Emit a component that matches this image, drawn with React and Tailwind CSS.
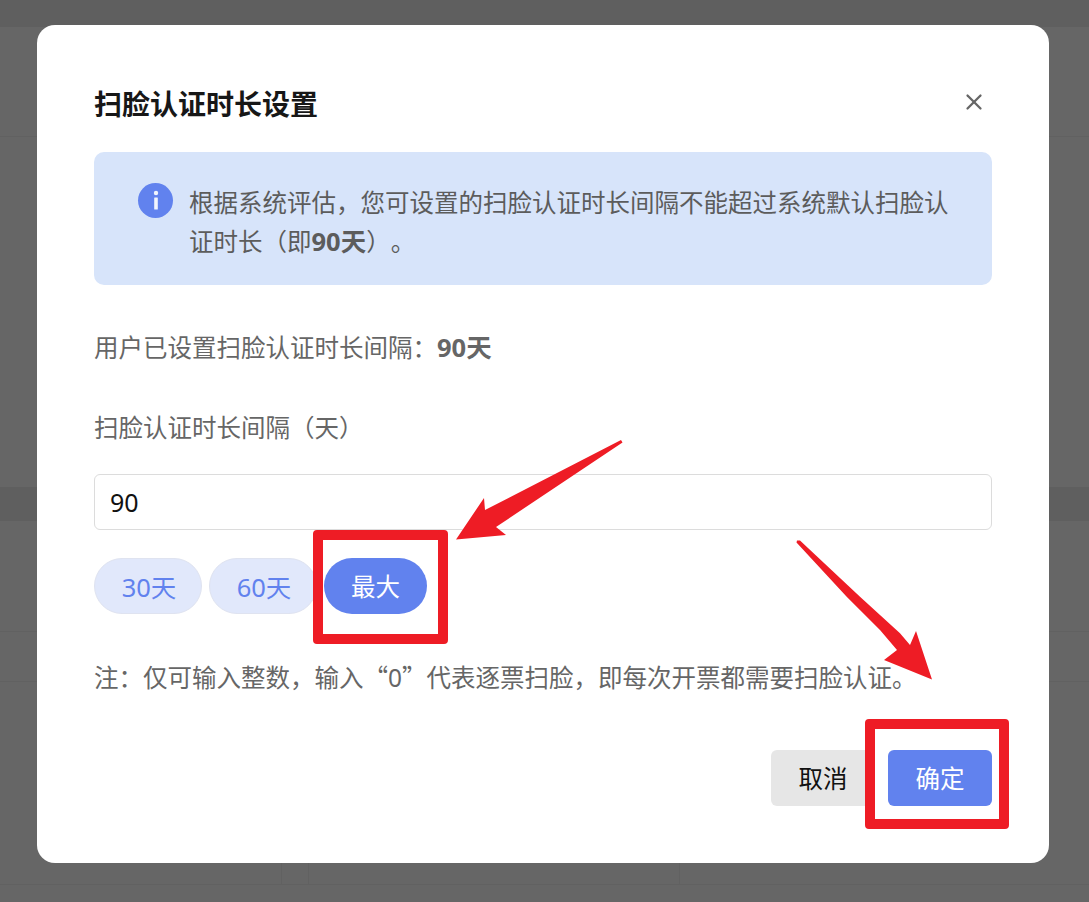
import React from "react";
import { X } from "lucide-react";

const font = { fontFamily: '"Noto Sans", "Noto Sans CJK SC", sans-serif' };
const cjkFont = { fontFamily: '"Noto Sans CJK SC", sans-serif' };

function Backdrop() {
  return (
    <div className="flex h-[902px] flex-col bg-[#666666]">
      <div className="h-[27px] bg-[#5f5f5f]" />
      <div className="h-[110px] border-b border-[#616161]" />
      <div className="h-[350px]" />
      <div className="h-[34px] bg-[#5f5f5f]" />
      <div className="h-[111px] border-b border-[#616161]" />
      <div className="h-[50px] border-b border-[#616161]" />
      <div className="relative h-[203px] border-b border-[#616161]">
        <div className="absolute bottom-0 left-[281px] h-[30px] w-px bg-[#616161]" />
        <div className="absolute bottom-0 left-[308px] h-[30px] w-px bg-[#616161]" />
        <div className="absolute bottom-0 left-[679px] h-[30px] w-px bg-[#616161]" />
      </div>
    </div>
  );
}

function InfoIcon() {
  return (
    <div className="flex h-[35px] w-[35px] shrink-0 items-center justify-center rounded-full bg-[#6182ee]">
      <svg width="8" height="21" viewBox="0 0 8 21" fill="#f2f5fd">
        <circle cx="4" cy="3" r="2.2" />
        <rect x="2.2" y="7.5" width="3.6" height="12" rx="0.5" />
      </svg>
    </div>
  );
}

function Arrows() {
  return (
    <svg
      className="pointer-events-none absolute left-0 top-0"
      width="1089"
      height="902"
      viewBox="0 0 1089 902"
    >
      <polygon
        fill="#ee1c25"
        points="621,440 622.5,442.5 496,527 506,535 456,539.5 484,498 485,510"
      />
      <polygon
        fill="#ee1c25"
        points="797,540.5 800,540.5 860,596.7 900,633.3 910,645 916,631 932,679.5 884,660 897,650 880,630 846.7,596.7 796.5,542.5"
      />
    </svg>
  );
}

export default function App() {
  return (
    <div
      className="relative h-[902px] w-[1089px] overflow-hidden [text-spacing-trim:space-all]"
      style={font}
    >
      <Backdrop />

      <div className="absolute left-[37px] top-[25px] flex h-[838px] w-[1012px] flex-col rounded-[18px] bg-white px-[57px] pt-[60px]">
        <div className="flex h-[39px] items-start justify-between">
          <h2 className="text-[28px] font-bold leading-[39px] text-[#171717]">扫脸认证时长设置</h2>
          <X size={26} strokeWidth={2.1} className="mr-[5px] mt-[4px] text-[#666666]" />
        </div>

        <div className="mt-[28px] flex h-[133px] gap-[16px] rounded-[10px] bg-[#d7e4fa] pl-[44px] pr-[36px] pt-[31px]">
          <InfoIcon />
          <p className="text-[24.5px] leading-[39px] text-[#5c5c5c]">
            根据系统评估，您可设置的扫脸认证时长间隔不能超过系统默认扫脸认证时长（即<b className="text-[25.5px]">90天</b>）。
          </p>
        </div>

        <p className="mt-[43px] text-[24.5px] leading-[39px] text-[#666666]">
          用户已设置扫脸认证时长间隔：<b className="text-[25.5px]">90天</b>
        </p>

        <p className="mt-[41px] text-[24.5px] leading-[39px] text-[#666666]">扫脸认证时长间隔（天）</p>

        <div className="mt-[27px] flex h-[56px] items-center rounded-[6px] border border-[#dcdcdc] px-[15px] pt-[2px] text-[25px] text-[#111111]">
          90
        </div>

        <div className="mt-[28px] flex gap-[7px]">
          <div className="flex h-[56px] w-[108px] items-center justify-center rounded-full border border-[#dfe3f0] bg-[#e1e8fb] pl-[2px] pt-[3px] text-[25.5px] text-[#6182ee]">
            30天
          </div>
          <div className="flex h-[56px] w-[108px] items-center justify-center rounded-full border border-[#dfe3f0] bg-[#e1e8fb] pl-[2px] pt-[3px] text-[25.5px] text-[#6182ee]">
            60天
          </div>
          <div className="flex h-[56px] w-[103px] items-center justify-center rounded-full bg-[#6182ee] pt-[3px] text-[24.5px] text-white">
            最大
          </div>
        </div>

        <p className="mt-[43px] whitespace-nowrap text-[24.5px] leading-[39px] text-[#666666]">
          注：仅可输入整数，输入<span style={cjkFont}>“</span>0<span style={cjkFont}>”</span>代表逐票扫脸，即每次开票都需要扫脸认证。
        </p>

        <div className="mt-[53px] flex justify-end gap-[13px]">
          <div className="flex h-[56px] w-[104px] items-center justify-center rounded-[6px] bg-[#e6e6e6] pt-[2px] text-[24.5px] text-[#111111]">
            取消
          </div>
          <div className="flex h-[56px] w-[104px] items-center justify-center rounded-[6px] bg-[#6182ee] pt-[2px] text-[24.5px] text-white">
            确定
          </div>
        </div>
      </div>

      <div className="pointer-events-none absolute left-[313px] top-[530px] h-[114px] w-[135px] rounded-[4px] border-[10px] border-[#ee1c25]" />
      <div className="pointer-events-none absolute left-[865px] top-[719px] h-[110px] w-[144px] rounded-[4px] border-[10px] border-[#ee1c25]" />
      <Arrows />
    </div>
  );
}
